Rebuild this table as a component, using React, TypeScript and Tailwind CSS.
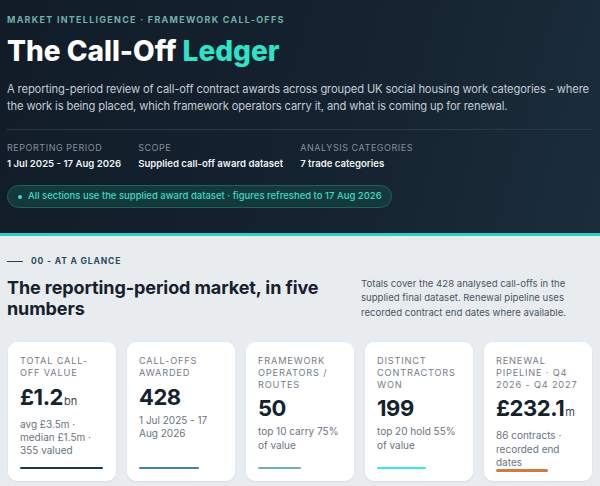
const stats = [
  {
    label: 'Total call-off value',
    value: '£1.2',
    unit: 'bn',
    sub: 'avg £3.5m · median £1.5m · 355 valued',
    bar: 'w-[83px] bg-[#1d3a4f]',
  },
  {
    label: 'Call-offs awarded',
    value: '428',
    sub: '1 Jul 2025 - 17 Aug 2026',
    bar: 'w-[60px] bg-[#3f8898]',
  },
  {
    label: 'Framework operators / routes',
    value: '50',
    sub: 'top 10 carry 75% of value',
    bar: 'w-[43px] bg-[#6fb3a8]',
  },
  {
    label: 'Distinct contractors won',
    value: '199',
    sub: 'top 20 hold 55% of value',
    bar: 'w-[49px] bg-[#37ecd6]',
  },
  {
    label: 'Renewal pipeline · Q4 2026 - Q4 2027',
    value: '£232.1',
    unit: 'm',
    sub: '86 contracts · recorded end dates',
    bar: 'w-[52px] bg-[#cf7c3f]',
  },
]

const meta = [
  { label: 'Reporting period', value: '1 Jul 2025 - 17 Aug 2026' },
  { label: 'Scope', value: 'Supplied call-off award dataset' },
  { label: 'Analysis categories', value: '7 trade categories' },
]

export default function App() {
  return (
    <div className="min-h-[486px] bg-[#e8ecef] font-['Inter','Noto_Sans',sans-serif]">
      {/* hero */}
      <header className="border-b-[3px] border-[#2cd0bf] bg-[linear-gradient(105deg,#111c28_0%,#15222f_55%,#1b2d3b_100%)] px-[7px] pt-[14px] pb-[25px]">
        <p className="text-[9px] font-bold uppercase leading-[12px] tracking-[0.14em] text-[#6fb0ac]">
          Market Intelligence · Framework Call-Offs
        </p>
        <h1 className="mt-[8px] text-[28px] font-extrabold leading-[34px] text-white">
          The Call-Off <span className="text-[#2de3c8]">Ledger</span>
        </h1>
        <p className="mt-[13px] -mr-[4px] text-[11.2px] leading-[17px] tracking-[-0.012em] text-[#c3cbd4]">
          A reporting-period review of call-off contract awards across grouped UK social housing work categories - where
          the work is being placed, which framework operators carry it, and what is coming up for renewal.
        </p>
        <div className="mt-[14px] border-t border-[#2a3847] pt-[12px]">
          <div className="flex gap-[17px]">
            {meta.map((m) => (
              <div key={m.label}>
                <p className="text-[9px] uppercase leading-[12px] tracking-[0.06em] text-[#84909b]">{m.label}</p>
                <p className="mt-[3px] text-[9.6px] font-semibold leading-[13px] text-[#eef2f5]">{m.value}</p>
              </div>
            ))}
          </div>
        </div>
        <div className="mt-[15px] inline-flex h-[23px] items-center gap-[6px] rounded-full border border-[#21605c] bg-[#14393d] pr-[9px] pl-[10px]">
          <span className="h-[4px] w-[4px] rounded-full bg-[#35e0c8]" />
          <span className="text-[9.5px] font-medium text-[#3fd9c3]">
            All sections use the supplied award dataset · figures refreshed to 17 Aug 2026
          </span>
        </div>
      </header>

      {/* at a glance */}
      <section className="px-[7px] pt-[20px] pb-[7px]">
        <div className="flex h-[11px] items-center gap-[8px]">
          <span className="h-[1.5px] w-[16px] bg-[#24425a]" />
          <span className="text-[8.5px] leading-[11px] font-bold uppercase tracking-[0.1em] text-[#2a4a60]">
            00 - At a glance
          </span>
        </div>
        <div className="mt-[9.5px] flex items-start">
          <h2 className="w-[330px] text-[18px] font-bold leading-[21px] tracking-[-0.005em] text-[#15212d]">
            The reporting-period market, in five numbers
          </h2>
          <p className="mr-[25px] ml-auto w-[207px] text-[9.6px] leading-[14.7px] text-[#4a5561]">
            Totals cover the 428 analysed call-offs in the supplied final dataset. Renewal pipeline uses recorded
            contract end dates where available.
          </p>
        </div>

        <div className="mt-[21px] flex gap-[11px] pl-[1px]">
          {stats.map((s) => (
            <div
              key={s.label}
              className="flex h-[139px] w-[108px] flex-col rounded-[9px] bg-white px-[12px] pt-[13.5px] pb-[11.5px] shadow-[0_1px_2px_rgba(20,32,45,0.08)]"
            >
              <p className="text-[9.2px] uppercase leading-[11.7px] tracking-[0.09em] text-[#747c86]">{s.label}</p>
              <p className="mt-[5px] text-[22px] font-bold leading-[26px] tracking-[-0.02em] text-[#16222e]">
                {s.value}
                {s.unit && (
                  <span className="ml-[1px] text-[11px] font-normal tracking-normal text-[#3d4752]">{s.unit}</span>
                )}
              </p>
              <p className="mt-[4px] text-[10px] leading-[13.3px] text-[#6b737d]">{s.sub}</p>
              <div className={`mt-auto h-[2.5px] shrink-0 rounded-full ${s.bar}`} />
            </div>
          ))}
        </div>
      </section>
    </div>
  )
}
